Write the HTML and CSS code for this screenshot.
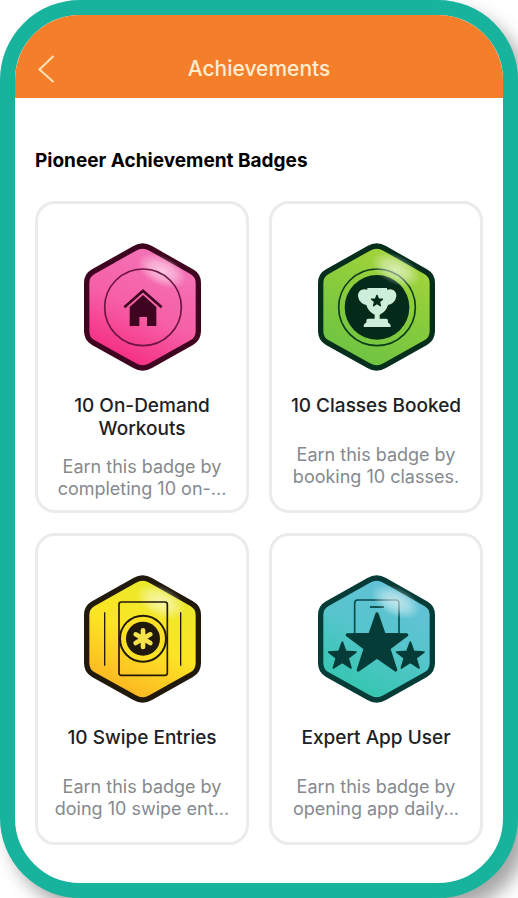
FILE: index.html
```html
<!DOCTYPE html>
<html lang="en">
<head>
<meta charset="utf-8">
<meta name="viewport" content="width=device-width, initial-scale=1">
<title>Achievements</title>
<link rel="stylesheet" href="styles.css">
</head>
<body>
<svg class="defs" aria-hidden="true">
  <defs>
    <linearGradient id="pink" x1="0.75" y1="0" x2="0.3" y2="1"><stop offset="0.1" stop-color="#f472b6"/><stop offset="0.55" stop-color="#f65fa6"/><stop offset="1" stop-color="#f5267e"/></linearGradient>
    <linearGradient id="green" x1="0.75" y1="0" x2="0.3" y2="1"><stop offset="0" stop-color="#a9d63a"/><stop offset="0.5" stop-color="#86cb3c"/><stop offset="1" stop-color="#6cc344"/></linearGradient>
    <linearGradient id="yellow" x1="0.75" y1="0" x2="0.3" y2="1"><stop offset="0" stop-color="#e4ea2c"/><stop offset="0.5" stop-color="#fce524"/><stop offset="1" stop-color="#fdb022"/></linearGradient>
    <linearGradient id="teal" x1="0.75" y1="0" x2="0.3" y2="1"><stop offset="0" stop-color="#66c1da"/><stop offset="0.5" stop-color="#55c5cb"/><stop offset="1" stop-color="#30c6ac"/></linearGradient>
    <radialGradient id="shine"><stop offset="0" stop-color="#fff" stop-opacity="0.6"/><stop offset="0.5" stop-color="#fff" stop-opacity="0.4"/><stop offset="1" stop-color="#fff" stop-opacity="0"/></radialGradient>
    <path id="hex" d="M176 40Q200 26 224 40L347 110Q367 121 367 144V288Q367 312 347 323L224 392Q200 406 176 392L52 323Q32 312 32 288V144Q32 121 52 110Z"/>
    <path id="star" d="M0-50L13-17 48-15 21 7 30 42 0 22-30 42-21 7-48-15-13-17Z"/>
  </defs>
</svg>
<div class="phone">
  <header class="bar">
    <button class="back" type="button" aria-label="Back">
      <svg viewBox="0 0 17 28" width="17" height="28"><path d="M15.500 1L1.500 14.500 15.500 27"/></svg>
    </button>
    <h1 class="bar-title">Achievements</h1>
  </header>
  <main class="content">
    <h2 class="section-title">Pioneer Achievement Badges</h2>
    <ul class="badges">
      <li class="card">
        <svg class="badge" viewBox="24 24 351 384" aria-hidden="true">
          <use href="#hex" fill="url(#pink)" stroke="#3f0520" stroke-width="16"/>
          <ellipse cx="258" cy="108" rx="80" ry="44" transform="rotate(26 258 108)" fill="url(#shine)"/>
          <circle cx="201" cy="217" r="115" fill="none" stroke="#6b1540" stroke-width="5"/>
          <path d="M145 217L201 167 257 217" fill="none" stroke="#3f0520" stroke-width="8"/>
          <path d="M201 180L241 216V273H213V246H190V273H161V216Z" fill="#3f0520"/>
        </svg>
        <h3 class="card-title">10 On-Demand Workouts</h3>
        <p class="card-text">Earn this badge by<br>completing 10 on-...</p>
      </li>
      <li class="card">
        <svg class="badge" viewBox="24 24 351 384" aria-hidden="true">
          <use href="#hex" fill="url(#green)" stroke="#052f1c" stroke-width="16"/>
          <circle cx="201" cy="217" r="115" fill="none" stroke="#0b3d1c" stroke-width="5"/>
          <circle cx="201" cy="217" r="97" fill="#042a1a"/>
          <ellipse cx="258" cy="104" rx="80" ry="44" transform="rotate(26 258 104)" fill="url(#shine)"/>
          <path d="M172 159H231V164Q242 160 251 166Q260 173 259 184Q258 196 248 204Q242 209 234 210Q229 229 209 239V251H228Q234 251 234 258V263Q242 264 242 276H161Q161 264 169 263V258Q169 251 175 251H194V239Q174 229 169 210Q161 209 155 204Q145 196 144 184Q143 173 152 166Q161 160 172 164Z" fill="#cdeed8"/>
          <use href="#star" fill="#042a1a" stroke="#042a1a" stroke-width="12" stroke-linejoin="round" transform="translate(201 198) scale(.34)"/>
        </svg>
        <h3 class="card-title">10 Classes Booked</h3>
        <p class="card-text">Earn this badge by<br>booking 10 classes.</p>
      </li>
      <li class="card">
        <svg class="badge" viewBox="24 24 351 384" aria-hidden="true">
          <use href="#hex" fill="url(#yellow)" stroke="#211a0c" stroke-width="16"/>
          <ellipse cx="255" cy="104" rx="80" ry="46" transform="rotate(26 255 104)" fill="url(#shine)"/>
          <g fill="none" stroke="#211a0c" stroke-width="5">
            <path d="M86 136V296M314 136V296" stroke-width="4"/>
            <rect x="129" y="105" width="145" height="220" rx="7"/>
            <circle cx="201" cy="215" r="69" fill="#fce026" stroke-width="6"/>
          </g>
          <circle cx="201" cy="215" r="51" fill="#211a0c"/>
          <path d="M201 190V240M179 202L223 228M223 202L179 228" stroke="#f6e34a" stroke-width="14" stroke-linecap="round"/>
        </svg>
        <h3 class="card-title">10 Swipe Entries</h3>
        <p class="card-text">Earn this badge by<br>doing 10 swipe ent...</p>
      </li>
      <li class="card">
        <svg class="badge" viewBox="24 24 351 384" aria-hidden="true">
          <use href="#hex" fill="url(#teal)" stroke="#053c38" stroke-width="16"/>
          <path d="M134 205V108Q134 99 143 99H258Q267 99 267 108V205" fill="none" stroke="#0b4a4d" stroke-width="5"/>
          <path d="M180 120H222" stroke="#053c38" stroke-width="5"/>
          <ellipse cx="258" cy="104" rx="80" ry="44" transform="rotate(26 258 104)" fill="url(#shine)"/>
          <g fill="#053c38" stroke="#053c38" stroke-linejoin="round">
            <path d="M201 141L222 202 290 204 236 244 257 309 201 270 145 309 166 244 112 204 180 202Z" stroke-width="10"/>
            <path d="M97 225L107 253 138 255 114 273 123 303 97 286 70 303 79 273 56 255 87 253Z" stroke-width="5"/>
            <path d="M301 225L311 253 342 255 318 273 327 303 301 286 274 303 283 273 260 255 291 253Z" stroke-width="5"/>
          </g>
        </svg>
        <h3 class="card-title">Expert App User</h3>
        <p class="card-text">Earn this badge by<br>opening app daily...</p>
      </li>
    </ul>
  </main>
</div>
</body>
</html>
```
FILE: styles.css
```css
* {
  box-sizing: border-box;
}

body {
  margin: 0;
  background: #fff;
  color: #202124;
  font-family: Inter, "Liberation Sans", sans-serif;
  overflow-x: hidden;
}

h1, h2, h3, p, ul {
  margin: 0;
  padding: 0;
}

.defs {
  position: absolute;
  width: 0;
  height: 0;
}

.phone {
  min-height: 100vh;
  border: 15px solid #17b39c;
  border-radius: 80px;
  background: #fff;
  overflow: hidden;
  box-shadow: 10px 12px 18px rgba(0, 0, 0, 0.35);
}

.bar {
  display: grid;
  grid-template-columns: 1fr auto 1fr;
  align-items: center;
  padding: 40px 23px 15px;
  background: #f57e2b;
  color: #ffedd0;
}

.back {
  justify-self: start;
  display: flex;
  padding: 0;
  border: 0;
  background: none;
}

.back path {
  fill: none;
  stroke: #ffe3b8;
  stroke-width: 2;
}

.bar-title {
  font-size: 21px;
  line-height: 28px;
  font-weight: 500;
}

.content {
  padding: 49px 20px 37px;
}

.section-title {
  margin-bottom: 26px;
  color: #000;
  font-size: 19px;
  line-height: 28px;
  font-weight: 700;
}

.badges {
  display: grid;
  grid-template-columns: 1fr 1fr;
  grid-auto-rows: 1fr;
  gap: 20px;
  list-style: none;
}

.card {
  display: flex;
  flex-direction: column;
  align-items: center;
  padding: 39px 12px 10px;
  border: 3px solid #ebebec;
  border-radius: 20px;
  text-align: center;
}

.badge {
  width: 117px;
  height: 128px;
  margin-bottom: 23px;
}

.card-title {
  min-height: 34px;
  margin-bottom: 16px;
  font-size: 19px;
  line-height: 23px;
  font-weight: 500;
}

.card-text {
  color: #858990;
  font-size: 18px;
  line-height: 22px;
  white-space: nowrap;
}
```
